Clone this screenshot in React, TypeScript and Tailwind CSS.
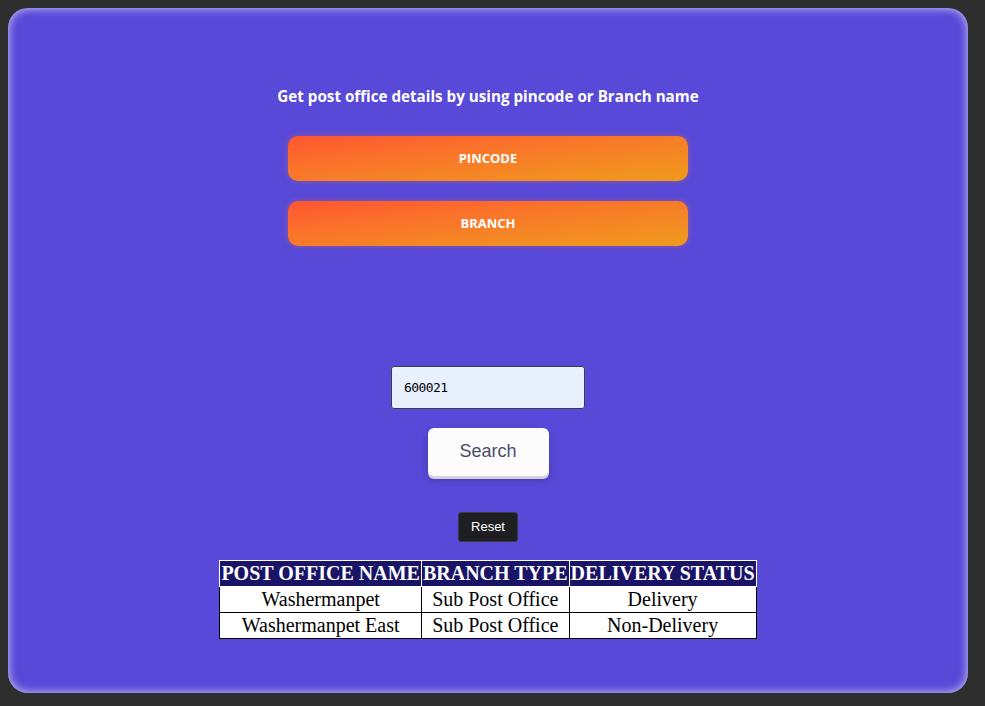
import React, { useState } from "react";

const rows = [
  { name: "Washermanpet", type: "Sub Post Office", status: "Delivery" },
  { name: "Washermanpet East", type: "Sub Post Office", status: "Non-Delivery" },
];

const App = () => {
  const [pin, setPin] = useState("600021");

  return (
    <div className="w-full h-[706px] bg-[#2e2e2e] pt-2 pl-2">
      <div className="w-[960px] h-[685px] rounded-[20px] bg-[#5849d8] shadow-[inset_0_0_10px_rgba(255,255,255,0.75)] flex flex-col items-center pt-[77px]">
        <h2 className="text-white font-bold text-[15.2px] font-['Open_Sans',sans-serif]">
          Get post office details by using pincode or Branch name
        </h2>
        <div className="flex flex-col gap-5 mt-[28px]">
          <button className="w-[400px] h-[45px] rounded-[10px] bg-linear-to-br from-[#ff5530] to-[#ee9b1a] text-white font-bold text-[13px] font-['Open_Sans',sans-serif] shadow-[0_0_6px_rgba(255,120,60,0.35)]">
            PINCODE
          </button>
          <button className="w-[400px] h-[45px] rounded-[10px] bg-linear-to-br from-[#ff5530] to-[#ee9b1a] text-white font-bold text-[13px] font-['Open_Sans',sans-serif] shadow-[0_0_6px_rgba(255,120,60,0.35)]">
            BRANCH
          </button>
        </div>
        <input
          value={pin}
          onChange={(e) => setPin(e.target.value)}
          className="mt-[120px] w-[194px] h-[43px] rounded-[3px] border border-[#3d3d4a] bg-[#e8f0fe] px-3 text-[13px] text-black font-['DejaVu_Sans_Mono',monospace] tracking-[-0.6px] outline-none"
        />
        <button className="mt-[19px] w-[121px] h-[48px] rounded-[6px] bg-[#fcfcfd] text-[#4a4d6a] text-[18px] font-['Liberation_Sans',Arial,sans-serif] shadow-[0_3px_0_#d2d1e2,0_4px_8px_rgba(0,0,0,0.2)]">
          Search
        </button>
        <button className="mt-[36px] w-[60px] h-[30px] rounded-[3px] bg-[#1f1f23] border border-[#3a3a40] text-white text-[13px] font-['Liberation_Sans',Arial,sans-serif]">
          Reset
        </button>
        <table className="mt-[18px] border-collapse font-['Liberation_Serif','Times_New_Roman',serif] text-[20px] leading-[23px]">
          <thead>
            <tr className="bg-[#1a1466] text-white">
              <th className="border border-white p-px font-bold">POST OFFICE NAME</th>
              <th className="border border-white p-px font-bold">BRANCH TYPE</th>
              <th className="border border-white p-px font-bold">DELIVERY STATUS</th>
            </tr>
          </thead>
          <tbody>
            {rows.map((r) => (
              <tr key={r.name} className="bg-white text-black text-center">
                <td className="border border-black p-px">{r.name}</td>
                <td className="border border-black p-px">{r.type}</td>
                <td className="border border-black p-px">{r.status}</td>
              </tr>
            ))}
          </tbody>
        </table>
      </div>
    </div>
  );
};

export default App;
